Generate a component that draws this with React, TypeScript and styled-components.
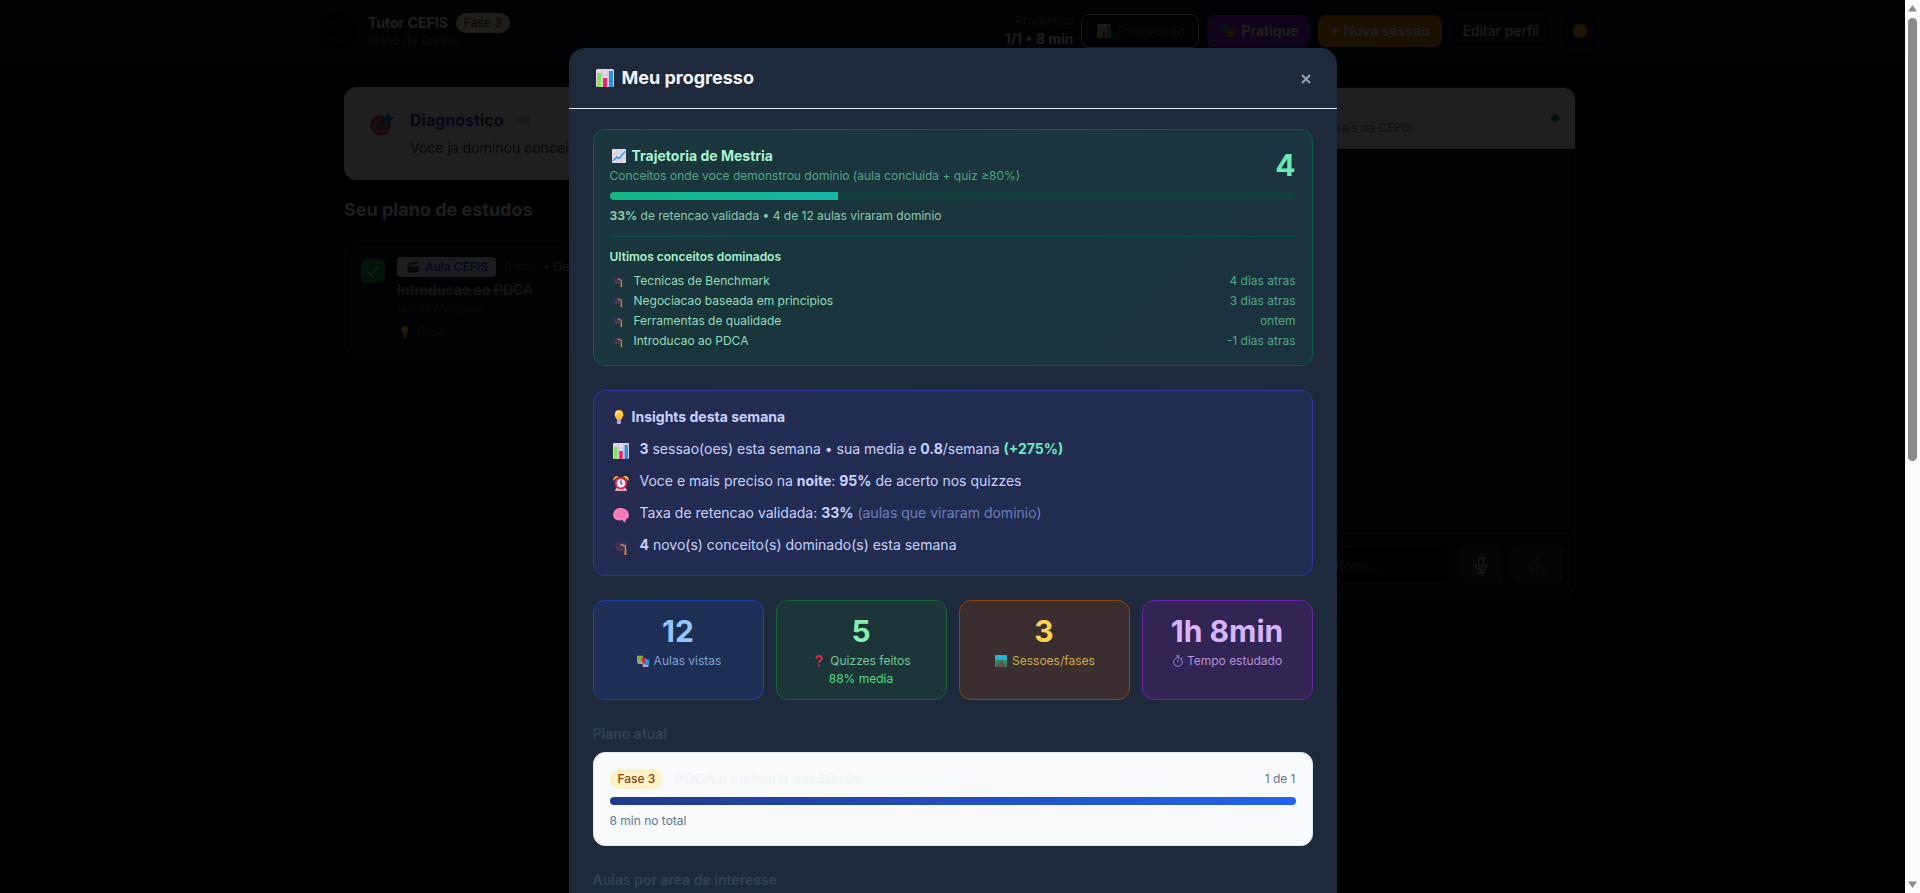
import React from 'react';
import styled, { createGlobalStyle, css } from 'styled-components';

const GlobalStyle = createGlobalStyle`
  *, *::before, *::after { box-sizing: border-box; }
  body {
    margin: 0;
    background: #020617;
    color: #e2e8f0;
    font-family: Inter, "Liberation Sans", sans-serif;
    font-size: 14px;
    line-height: 20px;
    overflow: hidden;
  }
  h1, h2, h3, p, ul { margin: 0; padding: 0; }
  ul { list-style: none; }
  button, input { font-family: inherit; font-size: 14px; line-height: 20px; }
`;

/* ---------- emoji drawings ---------- */

const EmojiBox = styled.span<{ $box: number }>`
  display: inline-flex;
  flex: none;
  align-items: center;
  justify-content: center;
  width: ${p => p.$box}px;
`;

const art: Record<string, React.ReactNode> = {
  chart: (
    <>
      <rect x="0" y="0" width="18" height="18" rx="1.5" fill="#e3dbe8" />
      <path d="M6 0V18M12 0V18M0 6H18M0 12H18" stroke="#c4b8ce" strokeWidth=".6" />
      <rect x="1" y="4" width="4" height="14" fill="#8be05a" />
      <rect x="7" y="9" width="4" height="9" fill="#e5266f" />
      <rect x="13" y="2" width="4" height="16" fill="#2f8fe0" />
    </>
  ),
  trend: (
    <>
      <rect x="0" y="0" width="18" height="18" rx="1" fill="#e3dbe8" />
      <path d="M6 0V18M12 0V18M0 6H18M0 12H18" stroke="#c4b8ce" strokeWidth=".7" />
      <path d="M1 15.5L6 10.5L9 12L17 3" fill="none" stroke="#2f8fe0" strokeWidth="1.7" />
    </>
  ),
  bulb: (
    <>
      <path d="M9 0C5.400 0 3.400 2.700 3.400 6C3.400 9 6 10.500 6.400 13H11.600C12 10.500 14.600 9 14.600 6C14.600 2.700 12.600 0 9 0Z" fill="#fbc93f" />
      <path d="M5.600 5C5.900 3.200 7.200 1.900 9 1.900" stroke="#fff1b8" strokeWidth="1.600" fill="none" />
      <path d="M7.500 7L8.200 13M10.500 7L9.800 13" stroke="#f59422" strokeWidth=".7" />
      <rect x="6.300" y="13" width="5.400" height="5" rx="1.500" fill="#b3a6bf" />
    </>
  ),
  clock: (
    <>
      <path d="M.5 6.500C-.5 3 2.500 0 6.500 1.500Z" fill="#f5a623" />
      <path d="M17.500 6.500C18.500 3 15.500 0 11.500 1.500Z" fill="#fbc02f" />
      <path d="M4 14L2 18H16L14 14Z" fill="#e8a9b8" />
      <circle cx="9" cy="9.200" r="7" fill="#e5264f" />
      <circle cx="9" cy="9.200" r="4.800" fill="#f4eef8" />
      <path d="M9 6V9.500L10.600 10.400" stroke="#3c2a5c" strokeWidth="1.200" fill="none" />
    </>
  ),
  brain: (
    <>
      <path d="M.5 11C-.8 6.500 2 2 7 1.200C12 .4 17.500 3.200 17.800 8.500C18 12 16.500 14 14.200 14L14 17.500L12 17L11 14.700C7 16 1.500 15 .5 11Z" fill="#fb7fb8" />
      <path d="M4 10C4.500 7.500 6 7 8 7.500M7 3.500C9 4 9.500 5.500 9 7M12 4C11.500 6 13 7.500 15 7.500M7 11.500C9 10 12 10.500 13 12" stroke="#dd5c9c" strokeWidth=".9" fill="none" />
    </>
  ),
  cap: (
    <>
      <path d="M3.500 8V12.500C6 14.500 10 14.500 13 12.500V8Z" fill="#4d3852" />
      <path d="M0 6.500L8.500 2.500L18 6.500L9.500 11Z" fill="#3f3254" />
      <path d="M8.500 6L14 8V13" fill="none" stroke="#f0a13a" strokeWidth="1.300" />
      <path d="M13.200 11.500H15L15.200 18H12.800Z" fill="#e8842f" />
    </>
  ),
  books: (
    <>
      <path d="M0 1H9V11H0Z" fill="#7cb342" />
      <path d="M6 10H17V18H8.500V13H6Z" fill="#b79bc9" />
      <path d="M11 5L18 7V16L11 14Z" fill="#2f9bd8" />
      <path d="M7 3L12.500 4.500V14L7 12Z" fill="#c9304f" />
      <path d="M0 11H8V13H2Z" fill="#c9b7d6" />
    </>
  ),
  question: (
    <>
      <path d="M5 5.500C5 -.3 13 .2 13 5C13 8.500 9 8.500 9 12" fill="none" stroke="#d9304f" strokeWidth="2.800" />
      <circle cx="9" cy="15.800" r="1.700" fill="#d9304f" />
    </>
  ),
  road: (
    <>
      <rect x="0" y="0" width="18" height="18" rx="1" fill="#2bb0d6" />
      <path d="M0 8C5 7 13 7 18 8V18H0Z" fill="#2f8a57" />
      <path d="M8 9H10L16.500 18H1.500Z" fill="#6b4a58" />
    </>
  ),
  watch: (
    <g fill="none" stroke="#b292d9" strokeWidth="1.300">
      <circle cx="9" cy="10.500" r="6.500" />
      <path d="M9 11V7M9 4V1.500M6.500 1.200H11.500M14 5.500L15.500 4" />
    </g>
  ),
  target: (
    <>
      <circle cx="8" cy="10" r="7.700" fill="#d9304f" />
      <circle cx="8" cy="10" r="5.400" fill="#a7a1ab" />
      <circle cx="8" cy="10" r="4" fill="#d9304f" />
      <circle cx="8" cy="10" r="1.500" fill="#a7a1ab" />
      <path d="M8 10L13 5" stroke="#2b5a86" strokeWidth="1" />
      <path d="M10.500 7.500L10 4L14 0L14.800 3L18 4L14.500 8Z" fill="#2f8fe0" />
    </>
  ),
  speaker: (
    <>
      <path d="M0 6H4L10 2V16L4 12H0Z" fill="#bfc4cc" />
      <path d="M12 6Q14 9 12 12M14 3.500Q18 9 14 14.500" stroke="#6fa8d6" strokeWidth="1.500" fill="none" />
    </>
  ),
  masks: (
    <>
      <path d="M0 2C3 0 7 1 10 0V8C9 12 3 12 1 8Z" fill="#2f8fa8" />
      <path d="M7 7C10 9 14 8 18 6L17 14C14 19 8 17 7 13Z" fill="#f2a52b" />
      <path d="M9.500 10H11.500M14 9.500H16M10 13Q12.500 15.500 15 12.500" stroke="#6b3a1b" strokeWidth="1.200" fill="none" />
    </>
  ),
  sun: (
    <>
      <path d="M9 0L11 2L13.500 1L14.500 3.500L17 4.500L16.500 7L18 9L16.500 11L17 13.500L14.500 14.500L13.500 17L11 16L9 18L7 16L4.500 17L3.500 14.500L1 13.500L1.500 11L0 9L1.500 7L1 4.500L3.500 3.500L4.500 1L7 2Z" fill="#f58a1f" />
      <circle cx="9" cy="9" r="6.200" fill="#fba92a" />
    </>
  ),
  clapper: (
    <>
      <rect x="1" y="7" width="16" height="10" rx="1" fill="#3f3a5c" />
      <path d="M.5 4L16 0L17 3.500L1.500 7Z" fill="#5c5678" />
      <path d="M4 3L6 6M9 2L11 5M1 8.500H17" stroke="#8c87a6" strokeWidth="1.100" />
    </>
  ),
};

const Emoji = ({ name, size, box }: { name: string; size: number; box: number }) => (
  <EmojiBox $box={box} aria-hidden="true">
    <svg width={size} height={size} viewBox="0 0 18 18">{art[name]}</svg>
  </EmojiBox>
);

/* ---------- page behind the dialog ---------- */

const TopBar = styled.header`
  background: #0f1522;
  border-bottom: 1px solid #273142;
`;

const TopBarInner = styled.div`
  display: flex;
  align-items: center;
  gap: 8px;
  max-width: 1280px;
  margin: 0 auto;
  padding: 12px 0;
`;

const Logo = styled.svg`
  flex: none;
  margin-right: 4px;
`;

const Brand = styled.div`
  margin-right: auto;
`;

const BrandName = styled.h1`
  display: flex;
  align-items: center;
  gap: 8px;
  color: #f1f5f9;
  font-size: 14px;
  font-weight: 700;
  line-height: 20px;
`;

const Small = styled.p<{ $color: string; $align?: string }>`
  color: ${p => p.$color};
  font-size: 12px;
  line-height: 16px;
  text-align: ${p => p.$align || 'left'};
`;

const PhasePill = styled.span`
  flex: none;
  padding: 2px 8px;
  border-radius: 10px;
  background: #fef3c7;
  color: #92400e;
  font-size: 12px;
  font-weight: 500;
  line-height: 16px;
`;

const Tally = styled.p`
  color: #f1f5f9;
  font-weight: 600;
`;

const barButtonTones = {
  outline: css`border: 1px solid #cbd5e1; background: transparent; color: #475569; font-weight: 500;`,
  purple: css`border: 0; background: #7e22ce; color: #fff; font-weight: 600;`,
  amber: css`border: 0; background: #d98a06; color: #fff; font-weight: 600;`,
  plain: css`border: 1px solid #273142; background: transparent; color: #f1f5f9; font-weight: 400;`,
};

const BarButton = styled.button<{ $tone: keyof typeof barButtonTones }>`
  display: flex;
  align-items: center;
  gap: 4px;
  padding: 6px 12px;
  border-radius: 8px;
  white-space: nowrap;
  ${p => barButtonTones[p.$tone]}
`;

const ThemeButton = styled(BarButton)`
  height: 38px;
  padding: 8px;
`;

const Main = styled.main`
  display: grid;
  grid-template-columns: 2fr 1fr;
  gap: 24px;
  align-items: start;
  max-width: 1280px;
  margin: 0 auto;
  padding: 24px;
`;

const DiagnosisCard = styled.section`
  display: flex;
  gap: 12px;
  padding: 20px;
  border: 1px solid #fff;
  border-radius: 12px;
  background: #fff;
  color: #334155;
`;

const TargetSlot = styled.div`
  padding-top: 4px;
`;

const DiagnosisTitle = styled.h2`
  display: flex;
  align-items: center;
  gap: 10px;
  margin-bottom: 4px;
  color: #1e3a8a;
  font-size: 16px;
  line-height: 24px;
`;

const DiagnosisText = styled.p`
  line-height: 23px;
`;

const PlanTitle = styled.h2`
  margin: 16px 0;
  color: #f1f5f9;
  font-size: 18px;
  line-height: 28px;
`;

const LessonCard = styled.article`
  display: flex;
  gap: 12px;
  padding: 16px;
  border: 1px solid #273142;
  border-radius: 12px;
  background: #0f1522;
`;

const CheckLabel = styled.label`
  position: relative;
  display: block;
  width: 24px;
  height: 24px;
  margin-top: 2px;
`;

const CheckBox = styled.input`
  appearance: none;
  display: block;
  width: 24px;
  height: 24px;
  margin: 0;
  border-radius: 6px;
  background: #16a34a;
`;

const CheckMark = styled.svg`
  position: absolute;
  inset: 4px;
  pointer-events: none;
`;

const LessonMeta = styled.div`
  display: flex;
  align-items: center;
  gap: 8px;
  color: #94a3b8;
  font-size: 12px;
  line-height: 16px;
`;

const SourceTag = styled.span`
  display: flex;
  align-items: center;
  gap: 4px;
  padding: 2px 8px;
  border-radius: 4px;
  background: #dbeafe;
  color: #1e40af;
  font-weight: 500;
`;

const Faint = styled.span`
  color: #475569;
`;

const LessonName = styled.h3`
  margin-top: 3px;
  color: #94a3b8;
  font-size: 14px;
  font-weight: 600;
  line-height: 20px;
  text-decoration: line-through;
`;

const LevelNote = styled.p`
  display: flex;
  align-items: center;
  gap: 4px;
  margin-top: 8px;
  color: #475569;
  font-size: 12px;
  font-style: italic;
  line-height: 16px;
`;

const ChatPanel = styled.aside`
  display: flex;
  flex-direction: column;
  border: 1px solid #273142;
  border-radius: 12px;
  background: #0f1522;
  overflow: hidden;
`;

const ChatHead = styled.div`
  display: flex;
  align-items: center;
  justify-content: space-between;
  padding: 12px 16px;
  border-bottom: 1px solid #e2e8f0;
  background: #fff;
`;

const ChatTitle = styled.h2`
  color: #1e3a8a;
  font-size: 14px;
  line-height: 20px;
`;

const OnlineDot = styled.span`
  width: 8px;
  height: 8px;
  border-radius: 50%;
  background: #16a34a;
`;

const ChatLog = styled.div`
  height: 384px;
`;

const ChatForm = styled.form`
  display: flex;
  gap: 8px;
  padding: 12px;
  border-top: 1px solid #273142;
`;

const ChatInput = styled.input`
  flex: 1;
  min-width: 0;
  height: 38px;
  padding: 0 12px;
  border: 1px solid #273142;
  border-radius: 8px;
  background: #020617;
  &::placeholder { color: #64748b; opacity: 1; }
`;

const ChatButton = styled.button<{ $color: string }>`
  display: flex;
  align-items: center;
  justify-content: center;
  height: 38px;
  padding: 0 14px;
  border: 0;
  border-radius: 8px;
  background: #232b39;
  color: ${p => p.$color};
`;

/* ---------- dialog ---------- */

const Overlay = styled.div`
  position: fixed;
  inset: 0;
  display: flex;
  background: rgba(0, 0, 0, 0.88);
`;

const OverlayScroll = styled.div`
  flex: 1;
  padding: 48px 16px;
  overflow: hidden;
`;

const ScrollRail = styled.div`
  display: flex;
  flex-direction: column;
  align-items: center;
  width: 15px;
  padding: 4px 0;
  background: #fcfcfc;
`;

const ScrollThumb = styled.div`
  width: 9px;
  height: 50%;
  margin: 5px 0 auto;
  border-radius: 5px;
  background: #8b8b8b;
`;

const Dialog = styled.div`
  max-width: 768px;
  margin: 0 auto;
  border-radius: 16px;
  background: #1e293b;
`;

const DialogHead = styled.div`
  display: flex;
  align-items: center;
  justify-content: space-between;
  padding: 16px 24px;
  border-bottom: 1px solid #e2e8f0;
`;

const DialogTitle = styled.h2`
  display: flex;
  align-items: center;
  gap: 5px;
  color: #f1f5f9;
  font-size: 18px;
  font-weight: 700;
  line-height: 28px;
`;

const CloseButton = styled.button`
  display: flex;
  padding: 0;
  border: 0;
  background: transparent;
  color: #94a3b8;
`;

const DialogBody = styled.div`
  display: flex;
  flex-direction: column;
  gap: 24px;
  padding: 20px 24px;
`;

const panelTones = {
  green: css`
    border-color: #065f46;
    background: linear-gradient(135deg, #1a363b, #1c323f);
    color: #a7f3d0;
  `,
  indigo: css`
    border-color: #3730a3;
    background: linear-gradient(135deg, #242b52, #1f2d50);
    color: #c7d2fe;
  `,
  light: css`
    border-color: #e2e8f0;
    background: #f8fafc;
    color: #64748b;
  `,
};

const Panel = styled.section<{ $tone: keyof typeof panelTones }>`
  padding: 16px;
  border: 1px solid;
  border-radius: 12px;
  ${p => panelTones[p.$tone]}
`;

const SplitRow = styled.div`
  display: flex;
  align-items: center;
  justify-content: space-between;
`;

const PanelTitle = styled.h3`
  display: flex;
  align-items: center;
  gap: 3px;
  font-size: 14px;
  font-weight: 700;
  line-height: 20px;
`;

const MasteryNote = styled(Small)`
  margin-top: 2px;
`;

const BigNumber = styled.p<{ $color: string }>`
  color: ${p => p.$color};
  font-size: 30px;
  font-weight: 700;
  line-height: 36px;
`;

const Track = styled.div<{ $color: string }>`
  height: 8px;
  margin: 8px 0;
  border-radius: 4px;
  background: ${p => p.$color};
  overflow: hidden;
`;

const Fill = styled.div<{ $from: string; $to: string }>`
  height: 8px;
  background: linear-gradient(90deg, ${p => p.$from}, ${p => p.$to});
`;

const Recent = styled.div`
  margin-top: 12px;
  padding-top: 12px;
  border-top: 1px solid #0c4f46;
  font-size: 12px;
  line-height: 16px;
`;

const RecentTitle = styled.h4`
  margin: 0 0 8px;
  font-size: 12px;
  font-weight: 600;
`;

const RecentList = styled.ul`
  display: flex;
  flex-direction: column;
  gap: 4px;
`;

const RecentItem = styled.li`
  display: flex;
  gap: 8px;
  color: #93dcbc;
`;

const When = styled.span`
  margin-left: auto;
  color: #4fa688;
`;

const InsightList = styled.ul`
  display: flex;
  flex-direction: column;
  gap: 8px;
  margin-top: 12px;
`;

const InsightItem = styled.li`
  display: flex;
  gap: 8px;
  height: 24px;
`;

const Accent = styled.strong`
  color: #6ee7b7;
`;

const Muted = styled.span`
  color: #727cba;
`;

const StatGrid = styled.div`
  display: grid;
  grid-template-columns: repeat(4, 1fr);
  gap: 12px;
`;

const Stat = styled.section<{ $border: string; $bg: string }>`
  padding: 12px;
  border: 1px solid ${p => p.$border};
  border-radius: 12px;
  background: ${p => p.$bg};
  text-align: center;
`;

const StatLabel = styled.p<{ $color: string }>`
  display: flex;
  align-items: center;
  justify-content: center;
  gap: 3px;
  margin-top: 4px;
  color: ${p => p.$color};
  font-size: 12px;
  line-height: 16px;
`;

const StatNote = styled(Small)`
  margin-top: 2px;
`;

const SectionTitle = styled.h3`
  margin-bottom: 8px;
  color: #334155;
  font-size: 14px;
  font-weight: 600;
  line-height: 20px;
`;

const PlanName = styled.span`
  margin: 0 auto 0 12px;
  color: #f1f5f9;
  font-weight: 600;
`;

const concepts = [
  ['Tecnicas de Benchmark', '4 dias atras'],
  ['Negociacao baseada em principios', '3 dias atras'],
  ['Ferramentas de qualidade', 'ontem'],
  ['Introducao ao PDCA', '-1 dias atras'],
];

const insights: [string, React.ReactNode][] = [
  ['chart', <><b>3</b> sessao(oes) esta semana • sua media e <b>0.8</b>/semana <Accent>(+275%)</Accent></>],
  ['clock', <>Voce e mais preciso na <b>noite</b>: <b>95%</b> de acerto nos quizzes</>],
  ['brain', <>Taxa de retencao validada: <b>33%</b> <Muted>(aulas que viraram dominio)</Muted></>],
  ['cap', <><b>4</b> novo(s) conceito(s) dominado(s) esta semana</>],
];

const stats = [
  { value: '12', label: 'Aulas vistas', icon: 'books', border: '#1e40af', bg: '#1f2e54', color: '#93c5fd', soft: '#7ba5d8' },
  { value: '5', label: 'Quizzes feitos', icon: 'question', border: '#166534', bg: '#1d3539', color: '#86efac', soft: '#71c797', note: '88% media' },
  { value: '3', label: 'Sessoes/fases', icon: 'road', border: '#92400e', bg: '#3a2e31', color: '#fcd34d', soft: '#d0ab48' },
  { value: '1h 8min', label: 'Tempo estudado', icon: 'watch', border: '#6b21a8', bg: '#322554', color: '#d8b4fe', soft: '#b292d9' },
];

export default function App() {
  return (
    <>
      <GlobalStyle />
      <TopBar>
        <TopBarInner>
          <Logo width="36" height="36" viewBox="0 0 36 36" aria-hidden="true">
            <circle cx="18" cy="18" r="18" fill="#000" />
            <circle cx="18" cy="18" r="12" fill="#0f172a" />
            <path d="M7 18L15 9L25 10L20 16L29 13L25 24L19 27L18 20L13 22Z" fill="#000" />
          </Logo>
          <Brand>
            <BrandName>Tutor CEFIS <PhasePill>Fase 3</PhasePill></BrandName>
            <Small $color="#64748b">Plano de Carlos</Small>
          </Brand>
          <div>
            <Small $color="#64748b" $align="right">Progresso</Small>
            <Tally>1/1 • 8 min</Tally>
          </div>
          <BarButton $tone="outline"><Emoji name="chart" size={14} box={19} />Progresso</BarButton>
          <BarButton $tone="purple"><Emoji name="masks" size={14} box={19} />Pratique</BarButton>
          <BarButton $tone="amber">+ Nova sessao</BarButton>
          <BarButton $tone="plain">Editar perfil</BarButton>
          <ThemeButton $tone="plain" aria-label="Tema"><Emoji name="sun" size={16} box={22} /></ThemeButton>
        </TopBarInner>
      </TopBar>

      <Main>
        <div>
          <DiagnosisCard>
            <TargetSlot><Emoji name="target" size={24} box={33} /></TargetSlot>
            <div>
              <DiagnosisTitle>Diagnostico <Emoji name="speaker" size={16} box={22} /></DiagnosisTitle>
              <DiagnosisText>Voce ja dominou conceitos</DiagnosisText>
            </div>
          </DiagnosisCard>
          <PlanTitle>Seu plano de estudos</PlanTitle>
          <LessonCard>
            <CheckLabel>
              <CheckBox type="checkbox" defaultChecked aria-label="Aula concluida" />
              <CheckMark width="16" height="16" viewBox="0 0 16 16" fill="none" stroke="#e2e8f0" strokeWidth="1.5">
                <path d="M2.500 8.500L6 12L13.500 4" />
              </CheckMark>
            </CheckLabel>
            <div>
              <LessonMeta>
                <SourceTag><Emoji name="clapper" size={12} box={16} />Aula CEFIS</SourceTag>
                <Faint>8 min</Faint>
                <span>• Gestao</span>
              </LessonMeta>
              <LessonName>Introducao ao PDCA</LessonName>
              <Small $color="#475569">Lucas Marques</Small>
              <LevelNote><Emoji name="bulb" size={12} box={16} />Base</LevelNote>
            </div>
          </LessonCard>
        </div>

        <ChatPanel>
          <ChatHead>
            <div>
              <ChatTitle>Tutor</ChatTitle>
              <Small $color="#64748b">Respostas com as aulas reais da CEFIS</Small>
            </div>
            <OnlineDot />
          </ChatHead>
          <ChatLog />
          <ChatForm>
            <ChatInput aria-label="Mensagem" placeholder="Digite ou use o microfone..." />
            <ChatButton type="button" $color="#cbd5e1" aria-label="Microfone">
              <svg width="16" height="18" viewBox="0 0 16 18" fill="none" stroke="currentColor" strokeWidth="1.500">
                <rect x="5.500" y="1.500" width="5" height="9" rx="2.500" />
                <path d="M2 8C2 16 14 16 14 8M8 14V16.500M4 16.500H12" />
              </svg>
            </ChatButton>
            <ChatButton type="button" $color="#475569" aria-label="Enviar">
              <svg width="24" height="20" viewBox="0 0 24 24" fill="none" stroke="currentColor" strokeWidth="2">
                <path d="M12 19l9 2-9-18-9 18 9-2zm0 0v-8" />
              </svg>
            </ChatButton>
          </ChatForm>
        </ChatPanel>
      </Main>

      <Overlay>
        <OverlayScroll>
          <Dialog role="dialog" aria-labelledby="progress-title">
            <DialogHead>
              <DialogTitle id="progress-title"><Emoji name="chart" size={18} box={24} />Meu progresso</DialogTitle>
              <CloseButton aria-label="Fechar">
                <svg width="14" height="14" viewBox="0 0 14 14" stroke="currentColor" strokeWidth="2">
                  <path d="M3 4L11 12M11 4L3 12" />
                </svg>
              </CloseButton>
            </DialogHead>
            <DialogBody>
              <Panel $tone="green">
                <SplitRow>
                  <div>
                    <PanelTitle><Emoji name="trend" size={14} box={19} />Trajetoria de Mestria</PanelTitle>
                    <MasteryNote $color="#4fa688">Conceitos onde voce demonstrou dominio (aula concluida + quiz ≥80%)</MasteryNote>
                  </div>
                  <BigNumber $color="#6ee7b7">4</BigNumber>
                </SplitRow>
                <Track $color="#133f3c"><Fill $from="#10b981" $to="#14b8a6" style={{ width: `${(4 / 12) * 100}%` }} /></Track>
                <Small $color="#8cc9b3"><b>33%</b> de retencao validada • 4 de 12 aulas viraram dominio</Small>
                <Recent>
                  <RecentTitle>Ultimos conceitos dominados</RecentTitle>
                  <RecentList>
                    {concepts.map(([name, when]) => (
                      <RecentItem key={name}>
                        <Emoji name="cap" size={12} box={16} />
                        <span>{name}</span>
                        <When>{when}</When>
                      </RecentItem>
                    ))}
                  </RecentList>
                </Recent>
              </Panel>

              <Panel $tone="indigo">
                <PanelTitle><Emoji name="bulb" size={14} box={19} />Insights desta semana</PanelTitle>
                <InsightList>
                  {insights.map(([icon, text]) => (
                    <InsightItem key={icon}>
                      <Emoji name={icon} size={16} box={22} />
                      <span>{text}</span>
                    </InsightItem>
                  ))}
                </InsightList>
              </Panel>

              <StatGrid>
                {stats.map(s => (
                  <Stat key={s.label} $border={s.border} $bg={s.bg}>
                    <BigNumber $color={s.color}>{s.value}</BigNumber>
                    <StatLabel $color={s.soft}><Emoji name={s.icon} size={12} box={s.icon === 'watch' ? 12 : 16} />{s.label}</StatLabel>
                    {s.note && <StatNote $color="#4ade80" $align="center">{s.note}</StatNote>}
                  </Stat>
                ))}
              </StatGrid>

              <div>
                <SectionTitle>Plano atual</SectionTitle>
                <Panel $tone="light">
                  <SplitRow>
                    <PhasePill>Fase 3</PhasePill>
                    <PlanName>PDCA e melhoria em 30min</PlanName>
                    <Small $color="#64748b">1 de 1</Small>
                  </SplitRow>
                  <Track $color="#e2e8f0"><Fill $from="#1e3a8a" $to="#2563eb" style={{ width: '100%' }} /></Track>
                  <Small $color="#64748b">8 min no total</Small>
                </Panel>
              </div>

              <SectionTitle>Aulas por area de interesse</SectionTitle>
            </DialogBody>
          </Dialog>
        </OverlayScroll>
        <ScrollRail aria-hidden="true">
          <svg width="9" height="9" viewBox="0 0 9 9"><path d="M4.500 1L9 7.500H0Z" fill="#8b8b8b" /></svg>
          <ScrollThumb />
          <svg width="9" height="9" viewBox="0 0 9 9"><path d="M4.500 8L9 1.500H0Z" fill="#8b8b8b" /></svg>
        </ScrollRail>
      </Overlay>
    </>
  );
}
